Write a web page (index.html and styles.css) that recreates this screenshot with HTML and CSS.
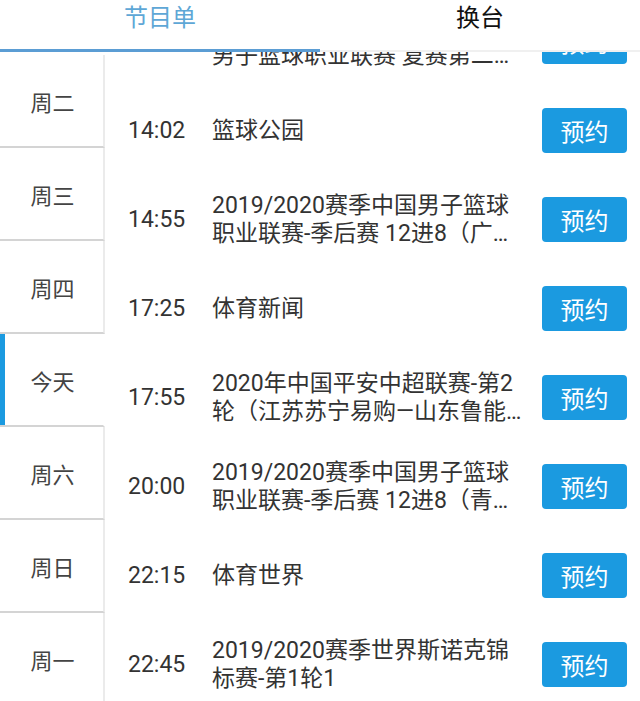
FILE: index.html
```html
<!DOCTYPE html>
<html lang="zh-CN">
<head>
  <meta charset="UTF-8" />
  <meta name="viewport" content="width=device-width, initial-scale=1.0"/>
  <title>节目单</title>
  <link rel="stylesheet" href="styles.css">
</head>
<body>

  <div class="tabs">
    <div class="tab active">节目单</div>
    <div class="tab">换台</div>
  </div>

  <div class="guide">
    <div class="days">
      <div class="day">周二</div>
      <div class="day">周三</div>
      <div class="day">周四</div>
      <div class="day current">今天</div>
      <div class="day">周六</div>
      <div class="day">周日</div>
      <div class="day">周一</div>
    </div>

    <div class="programs">
      <div class="program-list">
        <div class="program">
          <span class="time">13:00</span>
          <span class="title">2019/2020赛季中国篮球协会男子篮球职业联赛 复赛第二阶段</span>
          <button class="book">预约</button>
        </div>
        <div class="program">
          <span class="time">14:02</span>
          <span class="title">篮球公园</span>
          <button class="book">预约</button>
        </div>
        <div class="program">
          <span class="time">14:55</span>
          <span class="title">2019/2020赛季中国男子篮球职业联赛-季后赛 12进8（广东—北京）</span>
          <button class="book">预约</button>
        </div>
        <div class="program">
          <span class="time">17:25</span>
          <span class="title">体育新闻</span>
          <button class="book">预约</button>
        </div>
        <div class="program">
          <span class="time">17:55</span>
          <span class="title">2020年中国平安中超联赛-第2轮（江苏苏宁易购—山东鲁能泰山）</span>
          <button class="book">预约</button>
        </div>
        <div class="program">
          <span class="time">20:00</span>
          <span class="title">2019/2020赛季中国男子篮球职业联赛-季后赛 12进8（青岛—辽宁）</span>
          <button class="book">预约</button>
        </div>
        <div class="program">
          <span class="time">22:15</span>
          <span class="title">体育世界</span>
          <button class="book">预约</button>
        </div>
        <div class="program">
          <span class="time">22:45</span>
          <span class="title">2019/2020赛季世界斯诺克锦标赛-第1轮1</span>
          <button class="book">预约</button>
        </div>
      </div>
    </div>
  </div>

</body>
</html>
```

FILE: styles.css
```css
html, body {
  margin: 0;
  height: 100%;
  overflow: hidden;
}

body {
  font-family: Roboto, 'Noto Sans CJK SC', sans-serif;
  background: #fff;
  color: #333;
  display: flex;
  flex-direction: column;
}

.tabs {
  display: flex;
  flex-shrink: 0;
  height: 50px;
  border-bottom: 2px solid #f0f0f0;
  background: #fff;
}

.tab {
  flex: 1;
  text-align: center;
  font-size: 24px;
  line-height: 30px;
  padding-top: 3px;
  color: #111;
}

.tab.active {
  color: #5ea7d6;
  box-shadow: inset 0 -3px 0 #5b9dd4;
  margin-bottom: -2px;
}

.guide {
  flex: 1;
  display: flex;
  min-height: 0;
}

.days {
  width: 105px;
  flex-shrink: 0;
  padding-top: 3px;
}

.day {
  height: 91px;
  border-bottom: 2px solid #d4d4d4;
  border-right: 2px solid #ebebeb;
  display: flex;
  align-items: center;
  justify-content: center;
  font-size: 22px;
  color: #444;
  padding-left: 2px;
}

.day.current {
  border-right-color: #fff;
  box-shadow: inset 5px 0 0 #1b9ae0;
}

.programs {
  flex: 1;
  position: relative;
  overflow: hidden;
}

.program-list {
  margin-top: -55px;
}

.program {
  height: 89px;
  display: flex;
  align-items: center;
  padding-left: 23px;
  padding-right: 13px;
}

.time {
  width: 84px;
  flex-shrink: 0;
  font-size: 23px;
}

.title {
  width: 310px;
  font-size: 23px;
  line-height: 28px;
  display: -webkit-box;
  -webkit-box-orient: vertical;
  -webkit-line-clamp: 2;
  overflow: hidden;
}

.book {
  margin-left: auto;
  width: 85px;
  height: 45px;
  border: none;
  border-radius: 4px;
  background: #1b9ae0;
  color: #fff;
  font-family: inherit;
  font-size: 24px;
  padding: 0;
}
```
